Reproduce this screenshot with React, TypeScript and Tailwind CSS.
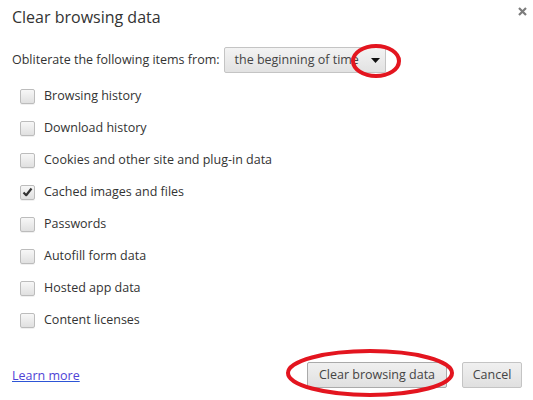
const items = [
  { label: "Browsing history", checked: false },
  { label: "Download history", checked: false },
  { label: "Cookies and other site and plug-in data", checked: false },
  { label: "Cached images and files", checked: true },
  { label: "Passwords", checked: false },
  { label: "Autofill form data", checked: false },
  { label: "Hosted app data", checked: false },
  { label: "Content licenses", checked: false },
];

function Checkbox({ checked }: { checked: boolean }) {
  return (
    <span className="flex h-[15px] w-[15px] items-center justify-center rounded-[2px] border border-[#bcbcbc] bg-gradient-to-b from-[#f7f7f7] to-[#e0e0e0] shadow-[0_1px_0_rgba(0,0,0,0.06)]">
      {checked && (
        <svg width="11" height="10" viewBox="0 0 11 10">
          <path d="M1.5 5.5 L4.2 8.2 L9.5 1.5" fill="none" stroke="#333" strokeWidth="2.2" strokeLinejoin="round" />
        </svg>
      )}
    </span>
  );
}

export default function App() {
  return (
    <div className="relative h-[400px] w-[533px] overflow-hidden bg-white font-['Open_Sans',sans-serif] text-[#333]">
      <div className="flex items-start justify-between pl-3 pr-[6px] pt-[6px]">
        <h1 className="text-[16px] leading-[22px] text-[#333]">Clear browsing data</h1>
        <svg width="9" height="9" viewBox="0 0 9 9" className="mt-[1px]">
          <path d="M1 1 L8 8 M8 1 L1 8" stroke="#7c7c7c" strokeWidth="2.2" />
        </svg>
      </div>

      <div className="mt-[19px] flex items-center gap-[4px] pl-3 text-[12.5px]">
        <span>Obliterate the following items from:</span>
        <div className="flex h-[26px] w-[162px] items-center justify-between rounded-[2px] border border-[#c4c4c4] bg-gradient-to-b from-[#f3f3f3] to-[#e2e2e2] pl-[10px] pr-[5px]">
          <span className="text-[#444]">the beginning of time</span>
          <svg width="9" height="5" viewBox="0 0 9 5">
            <path d="M0 0 H9 L4.5 5 Z" fill="#111" />
          </svg>
        </div>
      </div>

      <ul className="mt-[7px] flex flex-col pl-5 text-[12.5px]">
        {items.map((it) => (
          <li key={it.label} className="flex h-8 items-center gap-[9px]">
            <Checkbox checked={it.checked} />
            <span>{it.label}</span>
          </li>
        ))}
      </ul>

      <div className="absolute inset-x-0 bottom-[12px] flex items-center justify-between pl-3 pr-[11px] text-[12.5px]">
        <a href="#" className="mt-[3px] text-[#4f43d6] underline decoration-[#2d55d6]">
          Learn more
        </a>
        <div className="flex gap-[15px]">
          <button className="h-[26px] w-[140px] rounded-[2px] border border-[#aaa] bg-gradient-to-b from-[#f0f0f0] to-[#e0e0e0] text-[#444]">
            Clear browsing data
          </button>
          <button className="h-[26px] w-[60px] rounded-[2px] border border-[#c4c4c4] bg-gradient-to-b from-[#f0f0f0] to-[#e0e0e0] text-[#444]">
            Cancel
          </button>
        </div>
      </div>

      <svg className="pointer-events-none absolute left-0 top-0" width="533" height="400">
        <ellipse cx="376" cy="61" rx="23" ry="15" fill="none" stroke="#e3151f" strokeWidth="4" />
        <ellipse cx="370" cy="373" rx="82" ry="22" fill="none" stroke="#e3151f" strokeWidth="4" />
      </svg>
    </div>
  );
}
